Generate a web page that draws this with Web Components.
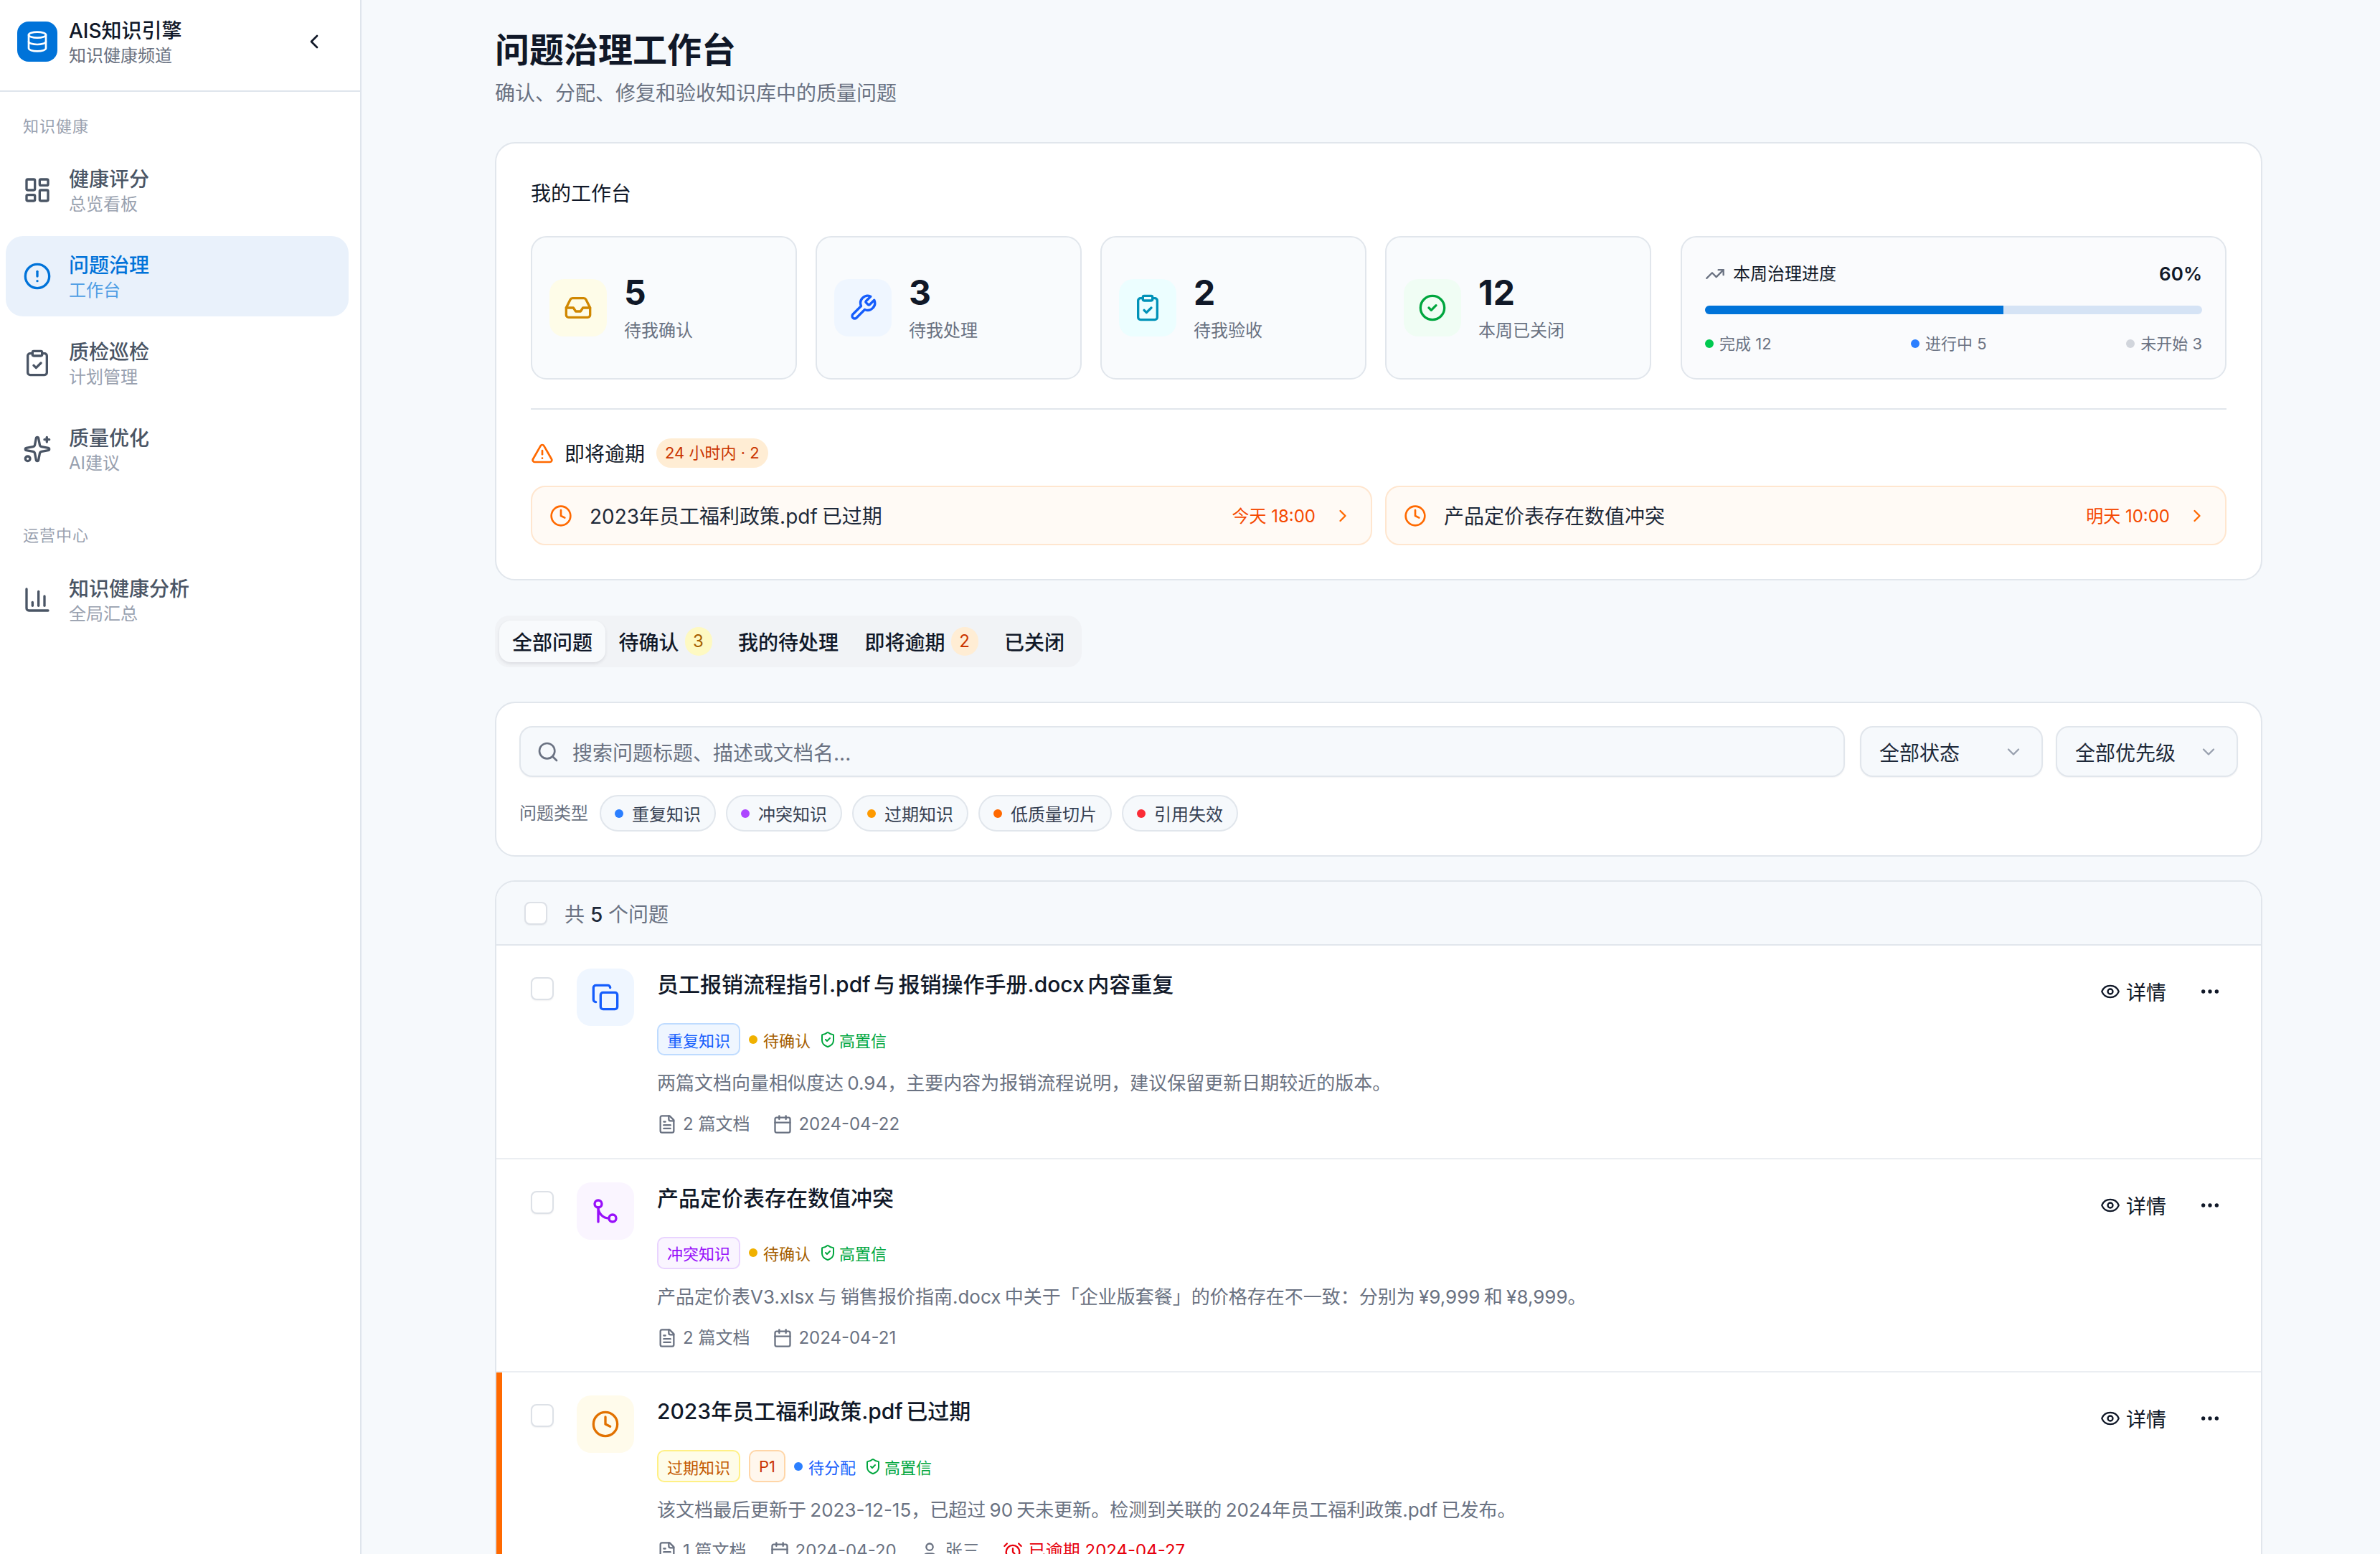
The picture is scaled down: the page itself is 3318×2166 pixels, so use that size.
<!DOCTYPE html>
<html lang="zh-CN">
<head>
<meta charset="utf-8">
<title>问题治理工作台</title>
<style>
html, body { margin: 0; height: 2166px; overflow: hidden; background: #f6f9fc; }
body { display: flex; font-family: Inter, "Noto Sans CJK SC", sans-serif; color: #101828; }
</style>
</head>
<body>
<side-nav>
    <nav-group label="知识健康">
        <nav-item icon="dashboard" sub="总览看板">健康评分</nav-item>
        <nav-item icon="alert" sub="工作台" active>问题治理</nav-item>
        <nav-item icon="clipboard" sub="计划管理">质检巡检</nav-item>
        <nav-item icon="sparkles" sub="AI建议">质量优化</nav-item>
    </nav-group>
    <nav-group label="运营中心" class="second">
        <nav-item icon="chart" sub="全局汇总">知识健康分析</nav-item>
    </nav-group>
</side-nav>
<work-page heading="问题治理工作台" sub="确认、分配、修复和验收知识库中的质量问题">
    <work-bench>
        <stat-card slot="stats" icon="inbox" tone="yellow" value="5">待我确认</stat-card>
        <stat-card slot="stats" icon="wrench" tone="blue" value="3">待我处理</stat-card>
        <stat-card slot="stats" icon="clipboard" tone="cyan" value="2">待我验收</stat-card>
        <stat-card slot="stats" icon="check" tone="green" value="12">本周已关闭</stat-card>
        <progress-card slot="progress" percent="60"></progress-card>
        <overdue-row slot="overdue" time="今天 18:00">2023年员工福利政策.pdf 已过期</overdue-row>
        <overdue-row slot="overdue" time="明天 10:00">产品定价表存在数值冲突</overdue-row>
    </work-bench>
    <tab-bar>
        <tab-item active>全部问题</tab-item>
        <tab-item count="3" tone="yellow">待确认</tab-item>
        <tab-item>我的待处理</tab-item>
        <tab-item count="2" tone="orange">即将逾期</tab-item>
        <tab-item>已关闭</tab-item>
    </tab-bar>
    <filter-panel>
        <type-chip color="#2b7fff">重复知识</type-chip>
        <type-chip color="#ad46ff">冲突知识</type-chip>
        <type-chip color="#fe9a00">过期知识</type-chip>
        <type-chip color="#ff6900">低质量切片</type-chip>
        <type-chip color="#fb2c36">引用失效</type-chip>
    </filter-panel>
    <issue-list total="5">
        <issue-row icon="copy" tone="blue">
            <span slot="title">员工报销流程指引.pdf 与 报销操作手册.docx 内容重复</span>
            <tag-badge slot="tags" tone="blue">重复知识</tag-badge>
            <status-dot slot="tags" tone="amber">待确认</status-dot>
            <trust-mark slot="tags">高置信</trust-mark>
            <span slot="desc">两篇文档向量相似度达 0.94，主要内容为报销流程说明，建议保留更新日期较近的版本。</span>
            <meta-item slot="meta" icon="file">2 篇文档</meta-item>
            <meta-item slot="meta" icon="calendar">2024-04-22</meta-item>
        </issue-row>
        <issue-row icon="merge" tone="purple">
            <span slot="title">产品定价表存在数值冲突</span>
            <tag-badge slot="tags" tone="purple">冲突知识</tag-badge>
            <status-dot slot="tags" tone="amber">待确认</status-dot>
            <trust-mark slot="tags">高置信</trust-mark>
            <span slot="desc">产品定价表V3.xlsx 与 销售报价指南.docx 中关于「企业版套餐」的价格存在不一致：分别为 ¥9,999 和 ¥8,999。</span>
            <meta-item slot="meta" icon="file">2 篇文档</meta-item>
            <meta-item slot="meta" icon="calendar">2024-04-21</meta-item>
        </issue-row>
        <issue-row icon="clock" tone="amber" overdue>
            <span slot="title">2023年员工福利政策.pdf 已过期</span>
            <tag-badge slot="tags" tone="yellow">过期知识</tag-badge>
            <tag-badge slot="tags" tone="orange">P1</tag-badge>
            <status-dot slot="tags" tone="blue">待分配</status-dot>
            <trust-mark slot="tags">高置信</trust-mark>
            <span slot="desc">该文档最后更新于 2023-12-15，已超过 90 天未更新。检测到关联的 2024年员工福利政策.pdf 已发布。</span>
            <meta-item slot="meta" icon="file">1 篇文档</meta-item>
            <meta-item slot="meta" icon="calendar">2024-04-20</meta-item>
            <meta-item slot="meta" icon="user">张三</meta-item>
            <meta-item slot="meta" icon="alarm" danger>已逾期 2024-04-27</meta-item>
        </issue-row>
    </issue-list>
</work-page>

<script>
'use strict';
(function () {
    const ICONS = {
        database: '<ellipse cx="12" cy="5" rx="9" ry="3"/><path d="M3 5V19A9 3 0 0 0 21 19V5"/><path d="M3 12A9 3 0 0 0 21 12"/>',
        chevronLeft: '<path d="m15 18-6-6 6-6"/>',
        chevronRight: '<path d="m9 18 6-6-6-6"/>',
        chevronDown: '<path d="m6 9 6 6 6-6"/>',
        dashboard: '<rect width="7" height="9" x="3" y="3" rx="1"/><rect width="7" height="5" x="14" y="3" rx="1"/><rect width="7" height="9" x="14" y="12" rx="1"/><rect width="7" height="5" x="3" y="16" rx="1"/>',
        alert: '<circle cx="12" cy="12" r="10"/><line x1="12" x2="12" y1="8" y2="12"/><line x1="12" x2="12.01" y1="16" y2="16"/>',
        clipboard: '<rect width="8" height="4" x="8" y="2" rx="1" ry="1"/><path d="M16 4h2a2 2 0 0 1 2 2v14a2 2 0 0 1-2 2H6a2 2 0 0 1-2-2V6a2 2 0 0 1 2-2h2"/><path d="m9 14 2 2 4-4"/>',
        sparkles: '<path d="M11.017 2.814a1 1 0 0 1 1.966 0l1.051 5.558a2 2 0 0 0 1.594 1.594l5.558 1.051a1 1 0 0 1 0 1.966l-5.558 1.051a2 2 0 0 0-1.594 1.594l-1.051 5.558a1 1 0 0 1-1.966 0l-1.051-5.558a2 2 0 0 0-1.594-1.594l-5.558-1.051a1 1 0 0 1 0-1.966l5.558-1.051a2 2 0 0 0 1.594-1.594z"/><path d="M20 2v4"/><path d="M22 4h-4"/><circle cx="4" cy="20" r="2"/>',
        chart: '<path d="M3 3v16a2 2 0 0 0 2 2h16"/><path d="M18 17V9"/><path d="M13 17V5"/><path d="M8 17v-3"/>',
        inbox: '<polyline points="22 12 16 12 14 15 10 15 8 12 2 12"/><path d="M5.45 5.11 2 12v6a2 2 0 0 0 2 2h16a2 2 0 0 0 2-2v-6l-3.45-6.89A2 2 0 0 0 16.76 4H7.24a2 2 0 0 0-1.79 1.11z"/>',
        wrench: '<path d="M14.7 6.3a1 1 0 0 0 0 1.4l1.6 1.6a1 1 0 0 0 1.4 0l3.77-3.77a6 6 0 0 1-7.94 7.94l-6.91 6.91a2.12 2.12 0 0 1-3-3l6.91-6.91a6 6 0 0 1 7.94-7.94l-3.76 3.76z"/>',
        check: '<circle cx="12" cy="12" r="10"/><path d="m9 12 2 2 4-4"/>',
        trending: '<polyline points="22 7 13.5 15.5 8.5 10.5 2 17"/><polyline points="16 7 22 7 22 13"/>',
        warning: '<path d="m21.73 18-8-14a2 2 0 0 0-3.48 0l-8 14A2 2 0 0 0 4 21h16a2 2 0 0 0 1.73-3"/><path d="M12 9v4"/><path d="M12 17h.01"/>',
        clock: '<circle cx="12" cy="12" r="10"/><polyline points="12 6 12 12 16 14"/>',
        search: '<path d="m21 21-4.34-4.34"/><circle cx="11" cy="11" r="8"/>',
        copy: '<rect width="14" height="14" x="8" y="8" rx="2" ry="2"/><path d="M4 16c-1.1 0-2-.9-2-2V4c0-1.1.9-2 2-2h10c1.1 0 2 .9 2 2"/>',
        merge: '<circle cx="18" cy="18" r="3"/><circle cx="6" cy="6" r="3"/><path d="M6 21V9a9 9 0 0 0 9 9"/>',
        eye: '<path d="M2.062 12.348a1 1 0 0 1 0-.696 10.75 10.75 0 0 1 19.876 0 1 1 0 0 1 0 .696 10.75 10.75 0 0 1-19.876 0"/><circle cx="12" cy="12" r="3"/>',
        ellipsis: '<circle cx="12" cy="12" r="1"/><circle cx="19" cy="12" r="1"/><circle cx="5" cy="12" r="1"/>',
        shield: '<path d="M20 13c0 5-3.5 7.5-7.66 8.95a1 1 0 0 1-.67-.01C7.5 20.5 4 18 4 13V6a1 1 0 0 1 1-1c2 0 4.5-1.2 6.24-2.72a1.17 1.17 0 0 1 1.52 0C14.51 3.81 17 5 19 5a1 1 0 0 1 1 1z"/><path d="m9 12 2 2 4-4"/>',
        file: '<path d="M15 2H6a2 2 0 0 0-2 2v16a2 2 0 0 0 2 2h12a2 2 0 0 0 2-2V7Z"/><path d="M14 2v4a2 2 0 0 0 2 2h4"/><path d="M10 9H8"/><path d="M16 13H8"/><path d="M16 17H8"/>',
        calendar: '<path d="M8 2v4"/><path d="M16 2v4"/><rect width="18" height="18" x="3" y="4" rx="2"/><path d="M3 10h18"/>',
        user: '<path d="M19 21v-2a4 4 0 0 0-4-4H9a4 4 0 0 0-4 4v2"/><circle cx="12" cy="7" r="4"/>',
        alarm: '<circle cx="12" cy="13" r="8"/><path d="M12 9v4l2 2"/><path d="M5 3 2 6"/><path d="m22 6-3-3"/><path d="M6.38 18.7 4 21"/><path d="M17.64 18.67 20 21"/>'
    };

    const TONES = {
        yellow: ['#fefce8', '#d08700'],
        blue: ['#eff6ff', '#155dfc'],
        cyan: ['#ecfeff', '#0092b8'],
        green: ['#f0fdf4', '#00a63e'],
        purple: ['#faf5ff', '#9810fa'],
        amber: ['#fffbeb', '#e17100']
    };

    // small base so each element only has to give its markup
    class Base extends HTMLElement {
        constructor() {
            super();
            this.attachShadow({mode: 'open'});
        }

        connectedCallback() {
            this.shadowRoot.innerHTML = this.render();
        }

        attr(name, fallback) {
            return this.getAttribute(name) || fallback || '';
        }
    }

    class AppIcon extends HTMLElement {
        constructor() {
            super();
            this.attachShadow({mode: 'open'});
        }

        connectedCallback() {
            const size = this.getAttribute('size') || 28;
            const name = this.getAttribute('name');
            this.shadowRoot.innerHTML = `
<style>
:host { display: inline-flex; flex: none; width: ${size}px; height: ${size}px; }
svg { display: block; width: 100%; height: 100%; }
</style>
<svg viewBox="0 0 24 24" fill="none" stroke="currentColor" stroke-width="2" stroke-linecap="round" stroke-linejoin="round">${ICONS[name] || ''}</svg>`;
        }
    }

    class SideNav extends Base {
        render() {
            return `
<style>
:host { display: block; flex: none; box-sizing: border-box; width: 504px; height: 2166px; background: #fff; border-right: 2px solid #dfe5ec; }
.head { display: flex; align-items: center; box-sizing: border-box; height: 128px; padding: 0 48px 10px 24px; border-bottom: 2px solid #dfe5ec; }
.logo { display: flex; align-items: center; justify-content: center; width: 56px; height: 56px; border-radius: 16px; background: #0073d9; color: #fff; }
.names { flex: 1; margin-left: 16px; padding-top: 4px; }
.name { font-size: 28px; line-height: 36px; font-weight: 500; color: #101828; }
.tag { font-size: 24px; line-height: 34px; color: #6a7282; }
.toggle { display: flex; color: #101828; }
.body { padding-top: 32px; }
</style>
<div class="head">
    <div class="logo"><app-icon name="database" size="32"></app-icon></div>
    <div class="names"><div class="name">AIS知识引擎</div><div class="tag">知识健康频道</div></div>
    <div class="toggle"><app-icon name="chevronLeft" size="32"></app-icon></div>
</div>
<div class="body"><slot></slot></div>`;
        }
    }

    class NavGroup extends Base {
        render() {
            const top = this.classList.contains('second') ? 48 : 0;
            const under = this.classList.contains('second') ? 18 : 17;
            return `
<style>
:host { display: block; margin-top: ${top}px; }
.label { padding-left: 32px; margin-bottom: ${under}px; font-size: 22px; line-height: 32px; letter-spacing: 1px; color: #99a1af; }
.items { display: flex; flex-direction: column; gap: 8.3px; padding: 0 16px 0 8px; }
</style>
<div class="label">${this.attr('label')}</div>
<div class="items"><slot></slot></div>`;
        }
    }

    class NavItem extends Base {
        render() {
            return `
<style>
:host { display: flex; align-items: center; box-sizing: border-box; height: 112px; padding: 0 24px; gap: 24px; border-radius: 24px; color: #4a5565; }
:host([active]) { background: #e9f1fb; color: #0073d9; }
.text { padding-top: 4px; }
.title { font-size: 28px; line-height: 36px; font-weight: 500; }
.sub { font-size: 24px; line-height: 34px; color: #99a1af; }
:host([active]) .sub { color: #4d9de4; }
</style>
<app-icon name="${this.attr('icon')}" size="40"></app-icon>
<div class="text"><div class="title"><slot></slot></div><div class="sub">${this.attr('sub')}</div></div>`;
        }
    }

    class WorkPage extends Base {
        render() {
            return `
<style>
:host { display: block; flex: 1; min-width: 0; box-sizing: border-box; height: 2166px; padding: 38px 164px 0 186px; overflow: hidden; }
h1 { margin: 0; font-size: 48px; line-height: 64px; font-weight: 600; color: #101828; }
p { margin: 6px 0 46px; font-size: 28px; line-height: 44px; color: #6a7282; }
</style>
<h1>${this.attr('heading')}</h1>
<p>${this.attr('sub')}</p>
<slot></slot>`;
        }
    }

    class WorkBench extends Base {
        render() {
            return `
<style>
:host { display: block; box-sizing: border-box; height: 611px; padding: 50px 48px 0; background: #fff; border: 2px solid #e1e6ec; border-radius: 28px; }
.title { font-size: 28px; line-height: 40px; font-weight: 400; }
.top { display: flex; gap: 41px; margin-top: 39px; }
.stats { display: flex; gap: 26px; }
.line { height: 2px; margin: 40px 0 40px; background: #e1e6ec; }
.label { display: flex; align-items: center; height: 41px; color: #ff6900; }
.label b { margin: 0 16px 0 15px; padding-top: 3px; font-size: 28px; line-height: 38px; font-weight: 400; color: #101828; }
.pill { padding: 0 12px; border-radius: 21px; background: #ffedd4; color: #ca3500; font-size: 22px; line-height: 41px; }
.rows { display: grid; grid-template-columns: 1fr 1fr; gap: 18px; margin-top: 25px; }
</style>
<div class="title">我的工作台</div>
<div class="top">
    <div class="stats"><slot name="stats"></slot></div>
    <slot name="progress"></slot>
</div>
<div class="line"></div>
<div class="label"><app-icon name="warning" size="32"></app-icon><b>即将逾期</b><span class="pill">24 小时内 · 2</span></div>
<div class="rows"><slot name="overdue"></slot></div>`;
        }
    }

    class StatCard extends Base {
        render() {
            const tone = TONES[this.attr('tone')] || TONES.blue;
            return `
<style>
:host { display: flex; align-items: center; box-sizing: border-box; width: 371px; height: 200px; padding: 0 24px; gap: 24px; background: #f9fbfd; border: 2px solid #e1e6ec; border-radius: 22px; }
.box { display: flex; align-items: center; justify-content: center; width: 80px; height: 80px; border-radius: 20px; background: ${tone[0]}; color: ${tone[1]}; }
.num { font-size: 48px; line-height: 48px; font-weight: 700; color: #101828; }
.txt { margin: 13px 0 -2px; font-size: 24px; line-height: 32px; color: #6a7282; }
</style>
<div class="box"><app-icon name="${this.attr('icon')}" size="40"></app-icon></div>
<div><div class="num">${this.attr('value')}</div><div class="txt"><slot></slot></div></div>`;
        }
    }

    class ProgressCard extends Base {
        render() {
            const percent = this.attr('percent', '0');
            return `
<style>
:host { display: block; flex: 1; box-sizing: border-box; height: 200px; padding: 33px 32px 0; background: #fafbfd; border: 2px solid #e1e6ec; border-radius: 22px; }
.head { display: flex; align-items: center; height: 36px; color: #6a7282; }
.head b { flex: 1; margin-left: 11px; font-size: 24px; line-height: 36px; font-weight: 400; color: #101828; }
.head span { font-size: 26px; line-height: 36px; font-weight: 600; color: #101828; }
.track { height: 12px; margin-top: 26px; border-radius: 6px; background: #d5e3f5; overflow: hidden; }
.fill { height: 100%; width: ${percent}%; background: #0073d9; }
.legend { display: flex; justify-content: space-between; margin-top: 25px; font-size: 22px; line-height: 32px; color: #6a7282; }
.legend span { display: flex; align-items: center; gap: 8px; }
i { width: 12px; height: 12px; border-radius: 50%; }
</style>
<div class="head"><app-icon name="trending" size="28"></app-icon><b>本周治理进度</b><span>${percent}%</span></div>
<div class="track"><div class="fill"></div></div>
<div class="legend">
    <span><i style="background:#00c950"></i>完成 12</span>
    <span><i style="background:#2b7fff"></i>进行中 5</span>
    <span><i style="background:#d1d5dc"></i>未开始 3</span>
</div>`;
        }
    }

    class OverdueRow extends Base {
        render() {
            return `
<style>
:host { display: flex; align-items: center; box-sizing: border-box; height: 83px; padding: 0 25px 0 24px; background: #fffaf5; border: 2px solid #ffe6cf; border-radius: 20px; color: #ff6900; }
.txt { flex: 1; margin-left: 24px; padding-top: 3px; font-size: 28px; line-height: 40px; word-spacing: -2px; color: #1e2939; }
.time { margin-right: 24px; padding-top: 3px; font-size: 24px; line-height: 40px; color: #f54900; }
</style>
<app-icon name="clock" size="32"></app-icon>
<div class="txt"><slot></slot></div>
<div class="time">${this.attr('time')}</div>
<app-icon name="chevronRight" size="28"></app-icon>`;
        }
    }

    class TabBar extends Base {
        render() {
            return `
<style>
:host { display: inline-flex; align-items: center; box-sizing: border-box; height: 72px; margin: 49px 0 48px; padding: 0 6px; gap: .5px; background: #f1f3f6; border-radius: 20px; vertical-align: top; }
</style>
<slot></slot>`;
        }
    }

    class TabItem extends Base {
        render() {
            const colors = {yellow: ['#fef9c2', '#a65f00'], orange: ['#ffedd4', '#ca3500']};
            const tone = colors[this.attr('tone')];
            const badge = this.hasAttribute('count')
                ? `<span class="badge" style="background:${tone[0]};color:${tone[1]}">${this.attr('count')}</span>` : '';
            return `
<style>
:host { display: flex; align-items: center; box-sizing: border-box; height: 58px; padding: 0 18px; gap: 8px; border-radius: 16px; font-size: 28px; line-height: 40px; font-weight: 500; color: #101828; white-space: nowrap; }
:host([active]) { background: #f8fafc; box-shadow: 0 2px 4px rgba(16, 24, 40, .1); }
.name { padding-top: 4px; }
.badge { width: 38px; height: 40px; border-radius: 20px; text-align: center; font-size: 24px; line-height: 40px; font-weight: 400; }
</style>
<span class="name"><slot></slot></span>${badge}`;
        }
    }

    class FilterPanel extends Base {
        render() {
            return `
<style>
:host { display: block; box-sizing: border-box; height: 216px; padding: 32px 32px 0; margin-bottom: 33px; background: #fff; border: 2px solid #e1e6ec; border-radius: 28px; }
.line { display: flex; gap: 18px; }
.field { display: flex; align-items: center; box-sizing: border-box; height: 71px; background: #f6f9fc; border: 2px solid #e1e6ec; border-radius: 18px; box-shadow: 0 1px 2px rgba(16, 24, 40, .05); }
.search { flex: 1; margin-right: 3px; padding-left: 22px; gap: 18px; color: #6a7282; font-size: 28px; }
.select { flex: none; width: 255px; padding: 0 25px; justify-content: space-between; font-size: 28px; color: #1e2939; }
.select + .select { width: 254px; }
.select app-icon { color: #99a1af; }
.types { display: flex; align-items: center; gap: 14px; margin-top: 25px; }
.types span { margin-right: 2px; font-size: 24px; line-height: 51px; color: #6a7282; }
</style>
<div class="line">
    <div class="field search"><app-icon name="search" size="32"></app-icon>搜索问题标题、描述或文档名...</div>
    <div class="field select">全部状态<app-icon name="chevronDown" size="28"></app-icon></div>
    <div class="field select">全部优先级<app-icon name="chevronDown" size="28"></app-icon></div>
</div>
<div class="types"><span>问题类型</span><slot></slot></div>`;
        }
    }

    class TypeChip extends Base {
        render() {
            return `
<style>
:host { display: flex; align-items: center; box-sizing: border-box; height: 51px; padding: 0 19px; gap: 12px; background: #f6f9fc; border: 2px solid #e1e6ec; border-radius: 26px; font-size: 24px; color: #364153; white-space: nowrap; }
i { width: 12px; height: 12px; border-radius: 50%; background: ${this.attr('color')}; }
</style>
<i></i><slot></slot>`;
        }
    }

    class IssueList extends Base {
        render() {
            return `
<style>
:host { display: block; background: #fff; border: 2px solid #e1e6ec; border-radius: 28px 28px 0 0; overflow: hidden; }
.head { display: flex; align-items: center; box-sizing: border-box; height: 89px; padding-left: 39px; gap: 24px; background: #f6f9fc; border-bottom: 2px solid #e1e6ec; font-size: 28px; color: #6a7282; }
.head b { font-weight: 500; color: #1e2939; }
.box { width: 32px; height: 32px; box-sizing: border-box; background: #fff; border: 2px solid #dde1e7; border-radius: 8px; box-shadow: 0 1px 2px rgba(16, 24, 40, .06); }
</style>
<div class="head"><div class="box"></div><div>共 <b>${this.attr('total')}</b> 个问题</div></div>
<slot></slot>`;
        }
    }

    class IssueRow extends Base {
        render() {
            const tone = TONES[this.attr('tone')] || TONES.blue;
            return `
<style>
:host { display: flex; box-sizing: border-box; height: 297.5px; padding: 32px 55px 0 48px; border-bottom: 2px solid #ebeef2; }
:host([overdue]) { box-shadow: inset 8px 0 0 #ff6900; height: 340px; }
.box { flex: none; width: 32px; height: 32px; margin-top: 12px; box-sizing: border-box; background: #fff; border: 2px solid #dde1e7; border-radius: 8px; box-shadow: 0 1px 2px rgba(16, 24, 40, .06); }
.icon { display: flex; flex: none; align-items: center; justify-content: center; width: 80px; height: 80px; margin: 0 32px; border-radius: 20px; background: ${tone[0]}; color: ${tone[1]}; }
.main { flex: 1; min-width: 0; }
.title { padding-top: 1px; font-size: 30px; line-height: 42px; font-weight: 500; word-spacing: -3.5px; color: #101828; }
.tags { display: flex; align-items: center; height: 45px; margin-top: 33px; gap: 12px; }
.desc { margin-top: 21px; font-size: 26px; line-height: 36px; word-spacing: -2px; color: #6a7282; }
.meta { display: flex; align-items: center; height: 34px; margin-top: 22px; gap: 32px; }
.acts { display: flex; flex: none; align-items: center; height: 64px; color: #101828; }
.more { display: flex; align-items: center; gap: 8px; font-size: 28px; margin-right: 45px; }
</style>
<div class="box"></div>
<div class="icon"><app-icon name="${this.attr('icon')}" size="40"></app-icon></div>
<div class="main">
    <div class="title"><slot name="title"></slot></div>
    <div class="tags"><slot name="tags"></slot></div>
    <div class="desc"><slot name="desc"></slot></div>
    <div class="meta"><slot name="meta"></slot></div>
</div>
<div class="acts">
    <div class="more"><app-icon name="eye" size="28"></app-icon>详情</div>
    <app-icon name="ellipsis" size="32"></app-icon>
</div>`;
        }
    }

    class TagBadge extends Base {
        render() {
            const colors = {
                blue: ['#eff6ff', '#bedbff', '#155dfc'],
                purple: ['#faf5ff', '#e9d4ff', '#9810fa'],
                yellow: ['#fefce8', '#fff085', '#c45a00'],
                orange: ['#fff7ed', '#ffd6a8', '#ca3500']
            };
            const tone = colors[this.attr('tone')] || colors.blue;
            return `
<style>
:host { display: flex; align-items: center; box-sizing: border-box; height: 45px; padding: 0 12px; background: ${tone[0]}; border: 2px solid ${tone[1]}; border-radius: 10px; font-size: 22px; color: ${tone[2]}; white-space: nowrap; }
</style>
<slot></slot>`;
        }
    }

    class StatusDot extends Base {
        render() {
            const colors = {amber: ['#f0b100', '#a65f00'], blue: ['#2b7fff', '#155dfc']};
            const tone = colors[this.attr('tone')] || colors.amber;
            return `
<style>
:host { display: flex; align-items: center; gap: 8px; font-size: 22px; color: ${tone[1]}; white-space: nowrap; }
i { width: 12px; height: 12px; border-radius: 50%; background: ${tone[0]}; }
</style>
<i></i><slot></slot>`;
        }
    }

    class TrustMark extends Base {
        render() {
            return `
<style>
:host { display: flex; align-items: center; gap: 4px; font-size: 22px; color: #00a63e; white-space: nowrap; }
</style>
<app-icon name="shield" size="24"></app-icon><slot></slot>`;
        }
    }

    class MetaItem extends Base {
        render() {
            return `
<style>
:host { display: flex; align-items: center; gap: 8px; font-size: 24px; line-height: 34px; color: #6a7282; white-space: nowrap; }
:host([danger]) { color: #e7000b; }
</style>
<app-icon name="${this.attr('icon')}" size="28"></app-icon><slot></slot>`;
        }
    }

    window.customElements.define('app-icon', AppIcon);
    window.customElements.define('side-nav', SideNav);
    window.customElements.define('nav-group', NavGroup);
    window.customElements.define('nav-item', NavItem);
    window.customElements.define('work-page', WorkPage);
    window.customElements.define('work-bench', WorkBench);
    window.customElements.define('stat-card', StatCard);
    window.customElements.define('progress-card', ProgressCard);
    window.customElements.define('overdue-row', OverdueRow);
    window.customElements.define('tab-bar', TabBar);
    window.customElements.define('tab-item', TabItem);
    window.customElements.define('filter-panel', FilterPanel);
    window.customElements.define('type-chip', TypeChip);
    window.customElements.define('issue-list', IssueList);
    window.customElements.define('issue-row', IssueRow);
    window.customElements.define('tag-badge', TagBadge);
    window.customElements.define('status-dot', StatusDot);
    window.customElements.define('trust-mark', TrustMark);
    window.customElements.define('meta-item', MetaItem);
})();
</script>
</body>
</html>
